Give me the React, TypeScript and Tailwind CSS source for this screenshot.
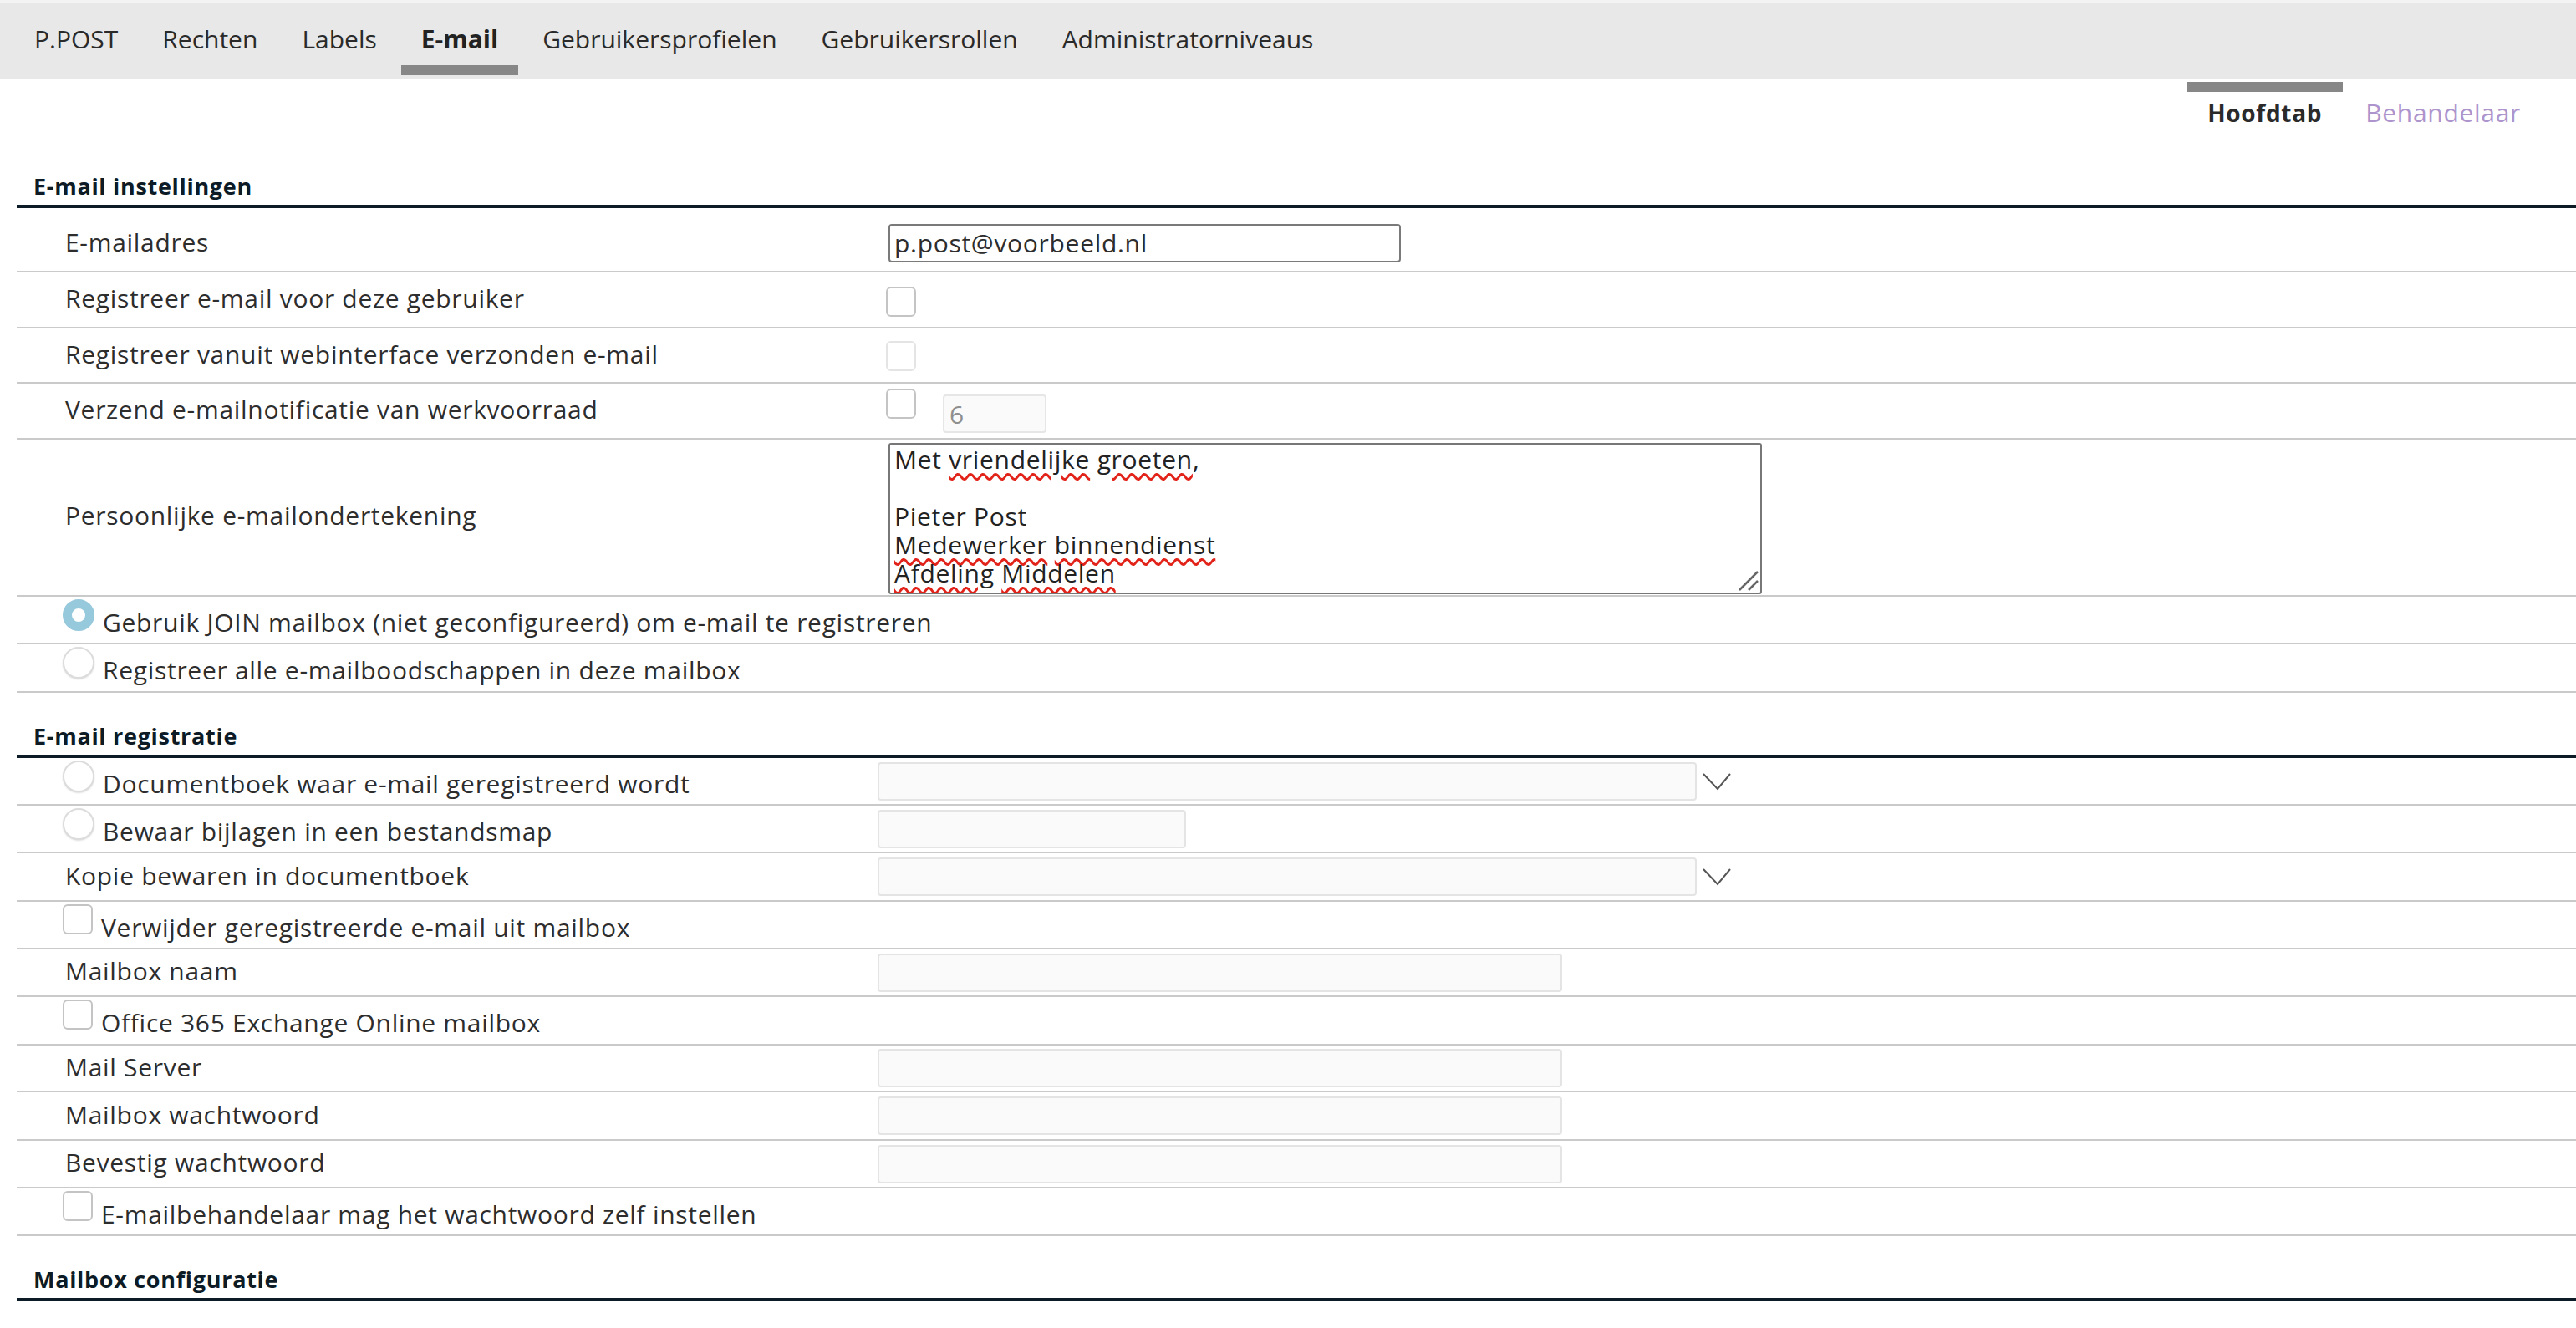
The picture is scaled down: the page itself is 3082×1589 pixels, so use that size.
import React from "react";

const tabs = [
  "P.POST",
  "Rechten",
  "Labels",
  "E-mail",
  "Gebruikersprofielen",
  "Gebruikersrollen",
  "Administratorniveaus",
];

type BoxProps = { disabled?: boolean };

const Checkbox: React.FC<BoxProps> = ({ disabled }) => (
  <span
    className={`block h-[36px] w-[36px] shrink-0 rounded-[6px] border-2 bg-white ${
      disabled ? "border-[#e4e4e4]" : "border-[#c4c4c4]"
    }`}
  />
);

const Radio: React.FC<{ checked?: boolean }> = ({ checked }) =>
  checked ? (
    <span className="block h-[38px] w-[38px] shrink-0 rounded-full border-[11px] border-[#96c9dc] bg-white" />
  ) : (
    <span className="block h-[38px] w-[38px] shrink-0 rounded-full border-2 border-[#dcdcdc] bg-white shadow-[0_1px_2px_rgba(0,0,0,0.14)]" />
  );

const Chevron = () => (
  <svg width="34" height="22" viewBox="0 0 34 22" className="ml-[7px] shrink-0">
    <polyline
      points="1,2 18,20 33,2"
      fill="none"
      stroke="#555"
      strokeWidth="2"
    />
  </svg>
);

const SectionHeader: React.FC<{ title: string; className: string }> = ({
  title,
  className,
}) => (
  <div
    className={`border-b-4 border-[#0c1b26] pb-[4px] pl-[20px] text-[27px] font-bold leading-[36px] text-[#0c1b26] ${className}`}
  >
    {title}
  </div>
);

const Spell: React.FC<{ children: React.ReactNode }> = ({ children }) => (
  <span className="underline decoration-[#e2231a] decoration-wavy decoration-[2.5px] underline-offset-[5px]">
    {children}
  </span>
);

// rij met label links en invoer rechts
const FieldRow: React.FC<{
  label: string;
  h: string;
  children?: React.ReactNode;
}> = ({ label, h, children }) => (
  <div
    className={`grid grid-cols-[1030px_1fr] items-center border-b-2 border-[#cacaca] ${h}`}
  >
    <div className="whitespace-nowrap pb-[4px] pl-[58px]">{label}</div>
    <div className="flex items-center">{children}</div>
  </div>
);

// rij met radio of checkbox voor het label
const InlineRow: React.FC<{
  control: React.ReactNode;
  label: string;
  h: string;
  children?: React.ReactNode;
}> = ({ control, label, h, children }) => (
  <div
    className={`grid grid-cols-[1030px_1fr] border-b-2 border-[#cacaca] ${h}`}
  >
    <div className="flex items-start pl-[55px]">
      <div className="mt-[3px]">{control}</div>
      <span className="ml-[10px] mt-[13px] whitespace-nowrap leading-[36px]">
        {label}
      </span>
    </div>
    <div className="flex items-center">{children}</div>
  </div>
);

const DisabledBox: React.FC<{ w: string }> = ({ w }) => (
  <input
    disabled
    className={`h-[46px] rounded-[4px] border-2 border-[#e4e4e4] bg-[#fafafa] ${w}`}
  />
);

const DisabledSelect = () => (
  <div className="flex items-center">
    <div className="h-[46px] w-[980px] rounded-[4px] border-2 border-[#e4e4e4] bg-[#fafafa]" />
    <Chevron />
  </div>
);

export default function App() {
  return (
    <div className="min-h-screen bg-white font-['Open_Sans',sans-serif] text-[30px] tracking-[0.7px] text-[#2d2d2d]">
      {/* hoofdnavigatie */}
      <div className="flex h-[94px] border-t-4 border-[#f3f3f3] bg-[#e8e8e8] pl-[17px] tracking-normal">
        <div className="flex gap-[5px]">
          {tabs.map((t) => (
            <div key={t} className="flex flex-col pt-[22px]">
              <span
                className={`px-[24px] leading-[41px] ${
                  t === "E-mail" ? "font-bold text-[#222]" : "text-[#2a2a2a]"
                }`}
              >
                {t}
              </span>
              <span
                className={`mt-[11px] h-[12px] ${
                  t === "E-mail" ? "bg-[#878787]" : "bg-transparent"
                }`}
              />
            </div>
          ))}
        </div>
      </div>

      {/* subtabs */}
      <div className="flex justify-end pr-[41px] pt-[4px]">
        <div className="flex flex-col">
          <span className="h-[12px] bg-[#878787]" />
          <span className="mt-[6px] px-[25px] text-[28px] font-bold leading-[38px] text-[#2a2a2a]">
            Hoofdtab
          </span>
        </div>
        <div className="ml-[2px] flex flex-col">
          <span className="h-[12px]" />
          <span className="mt-[5px] px-[25px] leading-[40px] text-[#ad94cd]">
            Behandelaar
          </span>
        </div>
      </div>

      <div className="ml-[20px]">
        <SectionHeader title="E-mail instellingen" className="mt-[50px]" />

        <div className="grid grid-cols-[1030px_1fr] items-center border-b-2 border-[#cacaca] pb-[10px] pt-[18px]">
          <div className="pb-[2px] pl-[58px]">E-mailadres</div>
          <div>
            <input
              readOnly
              value="p.post@voorbeeld.nl"
              className="ml-[13px] h-[46px] w-[613px] rounded-[4px] border-2 border-[#7a7a7a] bg-white px-[5px]"
            />
          </div>
        </div>

        <FieldRow label="Registreer e-mail voor deze gebruiker" h="h-[67px]">
          <div className="ml-[10px] mt-[5px]">
            <Checkbox />
          </div>
        </FieldRow>

        <FieldRow
          label="Registreer vanuit webinterface verzonden e-mail"
          h="h-[66px]"
        >
          <div className="ml-[10px] mt-[2px]">
            <Checkbox disabled />
          </div>
        </FieldRow>

        <div className="grid h-[67px] grid-cols-[1030px_1fr] items-center border-b-2 border-[#cacaca]">
          <div className="pb-[4px] pl-[58px]">
            Verzend e-mailnotificatie van werkvoorraad
          </div>
          <div className="flex items-start gap-[32px] self-stretch pl-[10px]">
            <div className="mt-[6px]">
              <Checkbox />
            </div>
            <input
              disabled
              value="6"
              className="mt-[13px] h-[46px] w-[124px] rounded-[4px] border-2 border-[#e6e6e6] bg-[#fafafa] px-[6px] text-[#8f8f8f]"
            />
          </div>
        </div>

        <div className="grid h-[188px] grid-cols-[1030px_1fr] items-center border-b-2 border-[#cacaca]">
          <div className="pb-[5px] pl-[58px]">
            Persoonlijke e-mailondertekening
          </div>
          <div className="self-stretch pl-[13px] pt-[4px]">
            <div className="relative h-[181px] w-[1045px] overflow-hidden rounded-[3px] border-2 border-[#777] px-[5px] pt-[1px] leading-[34px] text-[#222]">
              <div>
                Met <Spell>vriendelijke</Spell> <Spell>groeten</Spell>,
              </div>
              <div>&nbsp;</div>
              <div>Pieter Post</div>
              <div>
                <Spell>Medewerker</Spell> <Spell>binnendienst</Spell>
              </div>
              <div>
                <Spell>Afdeling</Spell> <Spell>Middelen</Spell>
              </div>
              <svg
                width="26"
                height="26"
                viewBox="0 0 26 26"
                className="absolute bottom-[1px] right-[1px]"
              >
                <line x1="24" y1="2" x2="2" y2="24" stroke="#666" strokeWidth="2.5" />
                <line x1="24" y1="13" x2="13" y2="24" stroke="#666" strokeWidth="2.5" />
              </svg>
            </div>
          </div>
        </div>

        <InlineRow
          control={<Radio checked />}
          label="Gebruik JOIN mailbox (niet geconfigureerd) om e-mail te registreren"
          h="h-[57px]"
        />
        <InlineRow
          control={<Radio />}
          label="Registreer alle e-mailboodschappen in deze mailbox"
          h="h-[58px]"
        />

        <SectionHeader title="E-mail registratie" className="mt-[34px]" />

        <InlineRow
          control={<Radio />}
          label="Documentboek waar e-mail geregistreerd wordt"
          h="h-[57px]"
        >
          <DisabledSelect />
        </InlineRow>
        <InlineRow
          control={<Radio />}
          label="Bewaar bijlagen in een bestandsmap"
          h="h-[57px]"
        >
          <DisabledBox w="w-[369px]" />
        </InlineRow>
        <FieldRow label="Kopie bewaren in documentboek" h="h-[58px]">
          <DisabledSelect />
        </FieldRow>
        <InlineRow
          control={<Checkbox />}
          label="Verwijder geregistreerde e-mail uit mailbox"
          h="h-[57px]"
        />
        <FieldRow label="Mailbox naam" h="h-[57px]">
          <DisabledBox w="w-[819px]" />
        </FieldRow>
        <InlineRow
          control={<Checkbox />}
          label="Office 365 Exchange Online mailbox"
          h="h-[58px]"
        />
        <FieldRow label="Mail Server" h="h-[56px]">
          <DisabledBox w="w-[819px]" />
        </FieldRow>
        <FieldRow label="Mailbox wachtwoord" h="h-[58px]">
          <DisabledBox w="w-[819px]" />
        </FieldRow>
        <FieldRow label="Bevestig wachtwoord" h="h-[57px]">
          <DisabledBox w="w-[819px]" />
        </FieldRow>
        <InlineRow
          control={<Checkbox />}
          label="E-mailbehandelaar mag het wachtwoord zelf instellen"
          h="h-[57px]"
        />

        <SectionHeader title="Mailbox configuratie" className="mt-[34px]" />
      </div>
    </div>
  );
}
